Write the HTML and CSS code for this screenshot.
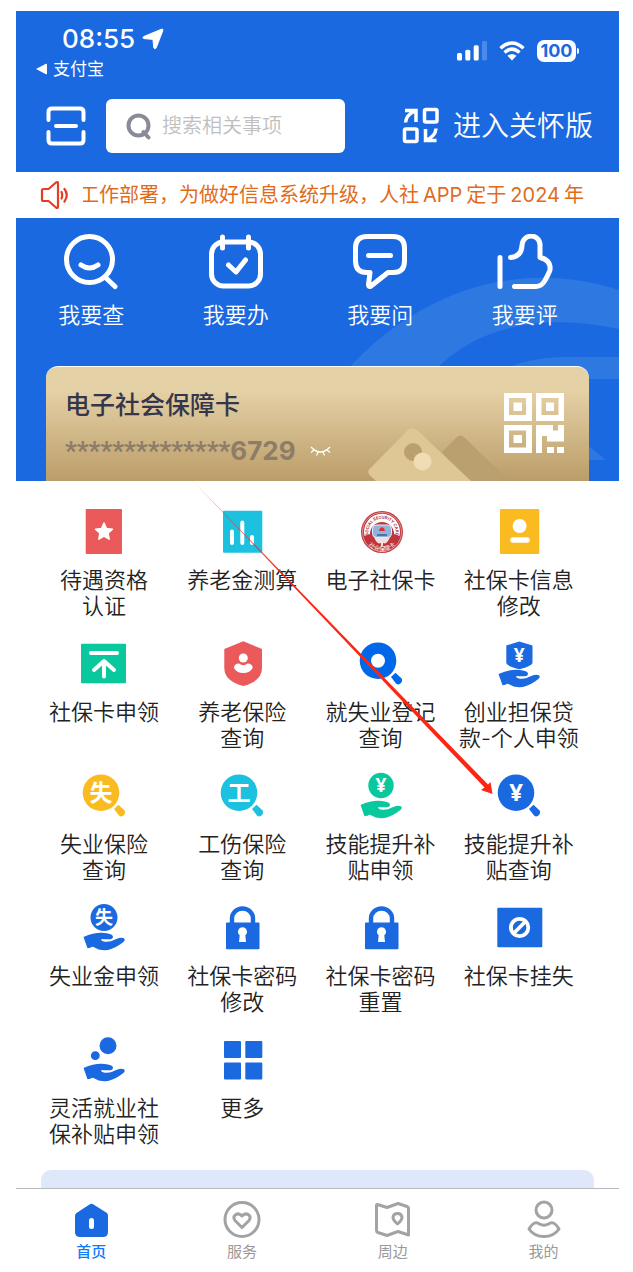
FILE: index.html
```html
<!DOCTYPE html>
<html lang="zh-CN">
<head>
<meta charset="utf-8">
<meta name="viewport" content="width=device-width, initial-scale=1">
<title>电子社保卡</title>
<link rel="stylesheet" href="styles.css">
</head>
<body>
<svg class="defs" aria-hidden="true">
  <symbol id="hand" viewBox="0 0 56 56"><path d="M7.500 38 Q18 33.500 26 33.800 Q36.500 34.300 37 37.500 Q37 40 34 40.300 Q29 40.500 25.500 40 Q24.500 41.500 27 42.300 Q33 44 39 40.500 L43 39 Q48.500 38 48.800 41 Q48.500 42.500 44 45.500 Q35 51.500 28 51.300 Q22 51 18.500 48.500 Q16 47 14.500 48.700 L11.500 49.300 Z"/></symbol>
  <symbol id="lens" viewBox="0 0 56 56"><circle cx="25" cy="25.700" r="18.300"/><path d="M38 42.500 L42.500 38.200 L48.300 43.800 Q50 46 48 48.500 Q45.500 51 43 49 Z" transform="translate(0 -.5)"/></symbol>
  <symbol id="lock" viewBox="0 0 56 56"><path d="M18 25 V19.500 A10.500 10 0 0 1 39 19.500 V25" fill="none" stroke="currentColor" stroke-width="4.400"/><rect x="12" y="23.500" width="33.500" height="26.700" rx="1"/><path fill="#fff" d="M28.500 28.200 a4.500 4.500 0 0 1 2.800 8 L32 43 H25 L25.700 36.200 A4.500 4.500 0 0 1 28.500 28.200Z"/></symbol>
</svg>
<div class="phone">
  <header class="top">
    <div class="status">
      <div class="status-left">
        <div class="time">08:55
          <svg width="22" height="22" viewBox="0 0 22 22" aria-hidden="true"><path d="M19.500 1.200 Q21.500 .6 20.800 2.700 L14.200 19.800 Q13 21.800 11.800 19.800 L11 12.200 Q10.900 11.400 10 11.300 L2 10.600 Q-.2 9.800 1.800 8.500Z" fill="#fff" stroke="#fff"/></svg>
        </div>
        <a class="back" href="#"><svg width="11" height="12" viewBox="0 0 11 12" aria-hidden="true"><path d="M0 6 L10 .8 Q11 .5 11 1.500 V10.500 Q11 11.500 10 11.200Z" fill="#fff"/></svg>支付宝</a>
      </div>
      <div class="status-right">
        <svg width="30" height="20" viewBox="0 0 30 20" aria-hidden="true" fill="#fff"><rect x="0" y="12" width="5" height="7.500" rx="1.500"/><rect x="8.300" y="8.700" width="5" height="10.800" rx="1.500"/><rect x="16.700" y="4.300" width="5" height="15.200" rx="1.500"/><rect x="25" y="0" width="5" height="19.500" rx="1.500" opacity=".22"/></svg>
        <svg class="wifi" width="26" height="20" viewBox="0 0 26 20" aria-hidden="true"><g fill="none" stroke="#fff" stroke-width="3.500"><path d="M1.500 7.300 Q13 -3.300 24.500 7.300"/><path d="M5.500 11.500 Q13 4.800 20.500 11.500"/></g><path fill="#fff" d="M8.500 14.800 Q13 11 17.500 14.800 L13 19.500Z"/></svg>
        <div class="battery">100</div>
      </div>
    </div>
    <div class="search-row">
      <button class="scan" type="button" aria-label="扫一扫"><svg width="40" height="40" viewBox="0 0 40 40" fill="none" stroke="#fff" stroke-width="4" stroke-linecap="round" stroke-linejoin="round"><path d="M2.500 14 V6 Q2.500 2.500 6 2.500 H34 Q37.500 2.500 37.500 6 V14 M2.500 26 V34 Q2.500 37.500 6 37.500 H34 Q37.500 37.500 37.500 34 V26 M10 20 H30"/></svg></button>
      <label class="search"><svg width="26" height="28" viewBox="0 0 26 28" fill="none" stroke="#8a8b98" stroke-width="4" aria-hidden="true"><circle cx="12.500" cy="13.500" r="10"/><path d="M17.500 20 L22.500 25.500" stroke-linecap="round"/></svg><input type="text" placeholder="搜索相关事项" aria-label="搜索相关事项"></label>
      <button class="care" type="button"><svg width="38" height="38" viewBox="0 0 38 38" fill="none" stroke="#fff" stroke-width="3.500" aria-hidden="true"><path d="M3 3.500 H14 V15 M3.500 15.500 Q4 8 13 4"/><rect x="22.500" y="2.500" width="12.500" height="12.500" rx="1.500"/><rect x="2.500" y="22" width="12.500" height="12.500" rx="1.500"/><path d="M34.500 33.500 H23.500 V22 M34 21.500 Q33.500 29 24.500 33"/></svg>进入关怀版</button>
    </div>
  </header>

  <div class="notice">
    <svg width="30" height="30" viewBox="0 0 30 30" fill="none" stroke="#e93b24" stroke-width="2.200" stroke-linejoin="round" stroke-linecap="round" aria-hidden="true"><path d="M8.500 9 L16 2.500 Q18 1.200 18 3.500 V26.500 Q18 28.800 16 27.500 L8.500 21 H3.500 Q2 21 2 19.500 V10.500 Q2 9 3.500 9Z"/><path d="M21.500 12 Q23 15 21.500 18.500 M24.500 9 Q29 15 24.500 21.500"/></svg>
    <p class="ticker"><span class="message">工作部署，为做好信息系统升级，人社<span class="latin">APP</span>定于<span class="latin">2024</span>年</span></p>
  </div>

  <section class="hero">
    <svg class="hero-bg" viewBox="0 0 603 263" preserveAspectRatio="xMaxYMin slice" aria-hidden="true"><g fill="#2e78e2"><path d="M330 153 C400 75 500 39 603 72 V111 C535 96 465 104 418 153Z"/><path d="M484 153 Q510 140 545 139 H603 V161 H484Z"/><path d="M570 226 L590 242 H570Z"/></g></svg>
    <nav class="quick">
      <a href="#"><svg width="56" height="56" viewBox="0 0 56 56"><circle cx="26.500" cy="25.500" r="23"/><path d="M42 43 L52 52.500 M18 31 Q26.500 37 35 31"/></svg>我要查</a>
      <a href="#"><svg width="56" height="56" viewBox="0 0 56 56"><rect x="3.500" y="8" width="49" height="44" rx="12"/><path d="M14.500 3 V14 M40.500 3 V14 M20.500 31 L28 38 L37.500 26"/></svg>我要办</a>
      <a href="#"><svg width="56" height="56" viewBox="0 0 56 56"><path d="M15 2.500 H41 Q52.500 2.500 52.500 14 V27 Q52.500 38.500 41 38.500 H36 L19 52 Q16.500 53.500 16.500 50.500 L18 38.500 H15 Q3.500 38.500 3.500 27 V14 Q3.500 2.500 15 2.500 M16.500 21.500 H38.500"/></svg>我要问</a>
      <a href="#"><svg width="56" height="56" viewBox="0 0 56 56"><path d="M3 23.500 V52.500 M13.500 23.500 Q24 23 25 12 C25 -1 43 -1 43 11 V23.500 Q54 26 53 36 Q52 39 48.500 45.500 Q45 52.500 39 52.500 H17.500"/></svg>我要评</a>
    </nav>
    <a class="card" href="#">
      <svg class="card-art" width="136" height="54" viewBox="0 0 136 54" aria-hidden="true"><path fill="#bba06f" d="M74 25 L88 11 Q92 6 97 11 L136 49 L131 54 H96Z"/><path fill="#dfc795" d="M1.500 42 L40 3 Q44 -1 49 3 L103 54 H8 L1.500 48 Q-1 45 1.500 42"/><circle cx="45" cy="25" r="9" fill="#bba06f"/><circle cx="54.500" cy="34.500" r="9" fill="#f0ddb3"/></svg>
      <div class="card-text">
        <h2>电子社会保障卡</h2>
        <div class="number"><span class="stars">**************</span><span>6729</span><svg width="21" height="10" viewBox="0 0 21 10" fill="none" stroke="#fff" stroke-width="1.300" aria-hidden="true"><path d="M1 1 Q10.500 11 20 1 M4 4 L1 6.500 M8 6 L6.500 9.500 M13 6 L14.500 9.500 M17 4 L20 6.500"/></svg></div>
      </div>
      <svg class="qr" width="60" height="60" viewBox="0 0 60 60" fill="#fff" fill-rule="evenodd" aria-hidden="true"><path d="M0 0H28V28H0Z M5 5V22H22V5Z M9.500 9.500H18V18H9.500Z M32 0H60V28H32Z M37.500 5V22H54.500V5Z M42 9.500H50V18H42Z M0 32H28V60H0Z M5 37.500V54.500H22V37.500Z M9.500 42H18V50H9.500Z M32 32H49V37.500H54V32H60V48.500H43V43H38V60H32Z M43 54H50V60H43Z M53 54H60V60H53Z"/></svg>
    </a>
  </section>

  <main class="services">
    <ul>
      <li><a href="#"><svg viewBox="0 0 56 56"><rect x="9.700" y="6" width="36.300" height="45" rx="1" fill="#eb5a5a"/><path fill="#fff" stroke="#fff" stroke-width="1.500" stroke-linejoin="round" d="M28 20 L30.500 25.500 L36.500 26.200 L32 30.200 L33.200 36.200 L28 33.200 L22.800 36.200 L24 30.200 L19.500 26.200 L25.500 25.500Z"/></svg>待遇资格<br>认证</a></li>
      <li><a href="#"><svg viewBox="0 0 56 56"><rect x="9" y="7.700" width="39.300" height="42" rx="1" fill="#1bc1df"/><path stroke="#fff" stroke-width="4" stroke-linecap="round" d="M18 28.500V40 M28.300 19.500V40 M38 34V40"/></svg>养老金测算</a></li>
      <li><a href="#"><svg viewBox="0 0 56 56"><circle cx="29" cy="29" r="21" fill="#c0353c"/><circle cx="29" cy="29" r="19.500" fill="none" stroke="#e9b9bb" stroke-width=".7"/><path d="M11.500 33 A18 18 0 1 1 46.500 33 L41 31 A12 12 0 1 0 17 31Z" fill="#fff"/><path d="M21 34 Q24 42 28 40 V43 H30 V40 Q34 42 37 34Z" fill="#f2dedf"/><rect x="19.500" y="22" width="19" height="12.500" rx="4" fill="#8fb4dc" stroke="#e7edf5" stroke-width="1"/><path d="M24 32H34" stroke="#4277b5" stroke-width="2"/><path d="M26 28 H32 L31 25.500 L29 24 L27 25.500Z" fill="#df2c2c"/><path id="arcTop" d="M16.300 34.500 A13.700 13.700 0 1 1 41.700 34.500" fill="none"/><path id="arcBottom" d="M13 39 A18.700 18.700 0 0 0 45 39" fill="none"/><text class="seal-en"><textPath href="#arcTop" startOffset="50%">SOCIAL SECURITY CARD</textPath></text><text class="seal-cn"><textPath href="#arcBottom" startOffset="50%">社会保障卡</textPath></text></svg>电子社保卡</a></li>
      <li><a href="#"><svg viewBox="0 0 56 56"><rect x="9" y="6" width="39.300" height="45" rx="1" fill="#fabb20"/><circle cx="28.600" cy="23" r="7" fill="#fff"/><path stroke="#fff" stroke-width="5.600" stroke-linecap="round" d="M22 37H36"/></svg>社保卡信息<br>修改</a></li>

      <li><a href="#"><svg viewBox="0 0 56 56"><rect x="5" y="8.800" width="45" height="39.400" rx="1" fill="#0ac89d"/><path fill="none" stroke="#fff" stroke-width="4" stroke-linecap="round" stroke-linejoin="round" d="M15 18H41 M18 35L28 26L38 35 M28 28V41.500"/></svg>社保卡申领</a></li>
      <li><a href="#"><svg viewBox="0 0 56 56"><path fill="#eb5a5a" d="M29.300 6.200L48 14V33Q48 46 29.300 51Q10.300 46 10.300 33V14Z"/><circle cx="29.300" cy="23" r="4.500" fill="#fff"/><path fill="#fff" d="M20 33 Q20 28.500 25 28.500 Q27 30.200 29.300 30.200 Q31.500 30.200 33.500 28.500 Q38.500 28.500 38.700 33 Q36 38 29.300 38 Q22.500 38 20 33Z"/></svg>养老保险<br>查询</a></li>
      <li><a href="#"><svg viewBox="0 0 56 56" class="sky"><use href="#lens"/><circle cx="25" cy="25.700" r="7" fill="#fff"/></svg>就失业登记<br>查询</a></li>
      <li><a href="#"><svg viewBox="0 0 56 56" class="blue"><path d="M28.300 6.500L41.500 10.500V28Q41 31 28.300 34.300Q15.500 31 15.300 28V10.500Z"/><use href="#hand" y="1"/><text class="yen" x="28.300" y="27">¥</text></svg>创业担保贷<br>款-个人申领</a></li>

      <li><a href="#"><svg viewBox="0 0 56 56" class="yellow"><use href="#lens"/><text class="glyph large" x="25" y="34">失</text></svg>失业保险<br>查询</a></li>
      <li><a href="#"><svg viewBox="0 0 56 56" class="cyan"><use href="#lens"/><text class="glyph large" x="25" y="34">工</text></svg>工伤保险<br>查询</a></li>
      <li><a href="#"><svg viewBox="0 0 56 56" class="green"><circle cx="28" cy="18.500" r="12.700"/><use href="#hand"/><text class="yen" x="28" y="25">¥</text></svg>技能提升补<br>贴申领</a></li>
      <li><a href="#"><svg viewBox="0 0 56 56" class="blue"><use href="#lens"/><text class="yen big" x="25" y="34">¥</text></svg>技能提升补<br>贴查询</a></li>

      <li><a href="#"><svg viewBox="0 0 56 56" class="blue"><circle cx="28" cy="18.500" r="13.500"/><use href="#hand"/><text class="glyph" x="28" y="25">失</text></svg>失业金申领</a></li>
      <li><a href="#"><svg viewBox="0 0 56 56" class="blue"><use href="#lock"/></svg>社保卡密码<br>修改</a></li>
      <li><a href="#"><svg viewBox="0 0 56 56" class="blue"><use href="#lock"/></svg>社保卡密码<br>重置</a></li>
      <li><a href="#"><svg viewBox="0 0 56 56" class="blue"><rect x="6.300" y="8.800" width="45" height="39.400" rx="1"/><circle cx="28.600" cy="28.500" r="8.700" fill="none" stroke="#fff" stroke-width="3.800"/><path stroke="#fff" stroke-width="3.800" d="M34.500 22.500L22.500 34.500"/></svg>社保卡挂失</a></li>

      <li><a href="#"><svg viewBox="0 0 56 56" class="blue"><circle cx="32" cy="14.700" r="8.500"/><circle cx="19.300" cy="24.700" r="4.400"/><use href="#hand" y="-1"/></svg>灵活就业社<br>保补贴申领</a></li>
      <li><a href="#"><svg viewBox="0 0 56 56" class="blue"><rect x="10" y="10" width="17" height="17" rx="1"/><rect x="31.300" y="10" width="17" height="17" rx="1"/><rect x="10" y="31.500" width="17" height="17" rx="1"/><rect x="31.300" y="31.500" width="17" height="17" rx="1"/></svg>更多</a></li>
    </ul>
    <svg class="pointer" width="304" height="318" viewBox="0 0 304 318" aria-hidden="true"><defs><linearGradient id="fade" x1="0" y1="0" x2="1" y2="1"><stop offset="0" stop-color="#fb2614" stop-opacity=".4"/><stop offset=".3" stop-color="#fb2614"/></linearGradient></defs><path fill="url(#fade)" d="M0 0 L298 306.500 L300.500 304 L302.500 316 L291 312 L294.500 309.500Z"/></svg>
  </main>

  <div class="banner"></div>
  <nav class="tabs">
    <a href="#" class="active"><svg width="40" height="40" viewBox="0 0 40 40"><path fill="#1a69e0" d="M18.500 4.500 Q20.500 3 22.500 4.500 L36 13 Q37 14 37 16 V32 Q37 37 32 37 H9 Q4 37 4 32 V16 Q4 14 5.500 13Z"/><path stroke="#fff" stroke-width="5" stroke-linecap="round" d="M20.500 20.500V26.500"/></svg>首页</a>
    <a href="#"><svg class="line" width="40" height="40" viewBox="0 0 40 40"><circle cx="20" cy="19.500" r="17"/><path d="M20 27.500 L13 20.500 Q10.500 17 13.500 14.800 Q17 12.500 20 16 Q23 12.500 26.500 14.800 Q29.500 17 27 20.500Z"/></svg>服务</a>
    <a href="#"><svg class="line" width="40" height="40" viewBox="0 0 40 40"><path d="M4.500 4.500 L14 7.500 L25 3.500 L34 6.500 Q35.500 7 35.500 8.500 V35 L25 31.500 L14 35.500 L5 32.500 Q3.500 32 3.500 30.500 V5.500 Q3.500 4.200 4.500 4.500Z"/><path d="M24.500 24 Q20 20 20 17.500 Q20.500 13.500 24.500 13.500 Q28.500 13.500 29 17.500 Q29 20 24.500 24Z"/></svg>周边</a>
    <a href="#"><svg class="line" width="40" height="40" viewBox="0 0 40 40"><circle cx="20" cy="10" r="8"/><path d="M5 29 Q10 20 15.500 24 Q20 26.500 24.500 24 Q30 20 35 29 Q30 36.500 20 36.500 Q10 36.500 5 29Z"/></svg>我的</a>
  </nav>
</div>
</body>
</html>
```
FILE: styles.css
```css
* { box-sizing: border-box; }
body {
  margin: 0;
  background: #fff;
  color: #222;
  font-family: Inter, "Noto Sans CJK SC", sans-serif;
}
a { color: inherit; text-decoration: none; }
button { background: none; border: 0; padding: 0; color: inherit; font: inherit; }
svg { display: block; flex: none; }
.defs { position: absolute; width: 0; height: 0; }
.phone { margin: 11px 14px 0 16px; }

.top { background: #1a69e0; color: #fff; padding: 12px 26px 19px 30px; }
.status { display: flex; justify-content: space-between; align-items: center; }
.status-left { margin-left: -10px; }
.time {
  display: flex;
  align-items: center;
  gap: 7px;
  padding-left: 26px;
  font-size: 26px;
  line-height: 32px;
  font-weight: 500;
}
.back { display: flex; align-items: center; gap: 6px; font-size: 17px; line-height: 28px; }
.status-right { display: flex; align-items: center; gap: 12px; padding: 0 17px 4px 0; }
.battery {
  position: relative;
  width: 39px;
  border-radius: 7px;
  background: #fff;
  color: #1a69e0;
  font-size: 18px;
  line-height: 22px;
  font-weight: 700;
  text-align: center;
}
.battery::after {
  content: "";
  position: absolute;
  right: -3px;
  top: 8px;
  width: 2px;
  height: 6px;
  border-radius: 0 2px 2px 0;
  background: #fff;
}
.search-row { display: flex; align-items: center; gap: 20px; margin-top: 16px; }
.search {
  display: flex;
  align-items: center;
  flex: 0 1 239px;
  min-width: 0;
  gap: 10px;
  height: 54px;
  padding: 0 20px;
  border-radius: 6px;
  background: #fff;
}
.search input {
  flex: 1;
  min-width: 0;
  border: 0;
  padding: 0;
  outline: 0;
  background: none;
  font: 350 20px/30px Inter, "Noto Sans CJK SC", sans-serif;
}
.search input::placeholder { color: #bfbfbf; opacity: 1; }
.care {
  display: flex;
  align-items: center;
  gap: 13px;
  margin-left: auto;
  font-size: 28px;
  line-height: 40px;
  font-weight: 350;
  white-space: nowrap;
}

.notice {
  display: flex;
  align-items: center;
  gap: 13px;
  height: 46px;
  padding: 0 31px 0 24px;
  color: #df6c1c;
}
.ticker {
  display: flex;
  flex: 1;
  min-width: 0;
  margin: 0;
  overflow: hidden;
  white-space: nowrap;
  font-size: 20px;
  line-height: 32px;
}
.message { margin-left: -4px; }
.latin { margin: 0 4px; }

.hero { position: relative; background: #1a69e0; padding: 16px 30px 0; }
.hero-bg { position: absolute; top: 0; left: 0; width: 100%; height: 100%; }
.quick {
  position: relative;
  display: grid;
  grid-template-columns: repeat(4, 1fr);
  margin: 0 -8px 0 -27px;
}
.quick a {
  display: flex;
  flex-direction: column;
  align-items: center;
  gap: 9px;
  color: #fff;
  font-size: 22px;
  line-height: 33px;
  font-weight: 350;
}
.quick svg { fill: none; stroke: #fff; stroke-width: 5; stroke-linecap: round; stroke-linejoin: round; }
.card {
  position: relative;
  display: flex;
  justify-content: space-between;
  margin-top: 34px;
  height: 115px;
  padding: 18px 25px 0 19px;
  overflow: hidden;
  border-top: 1px solid #fff;
  border-radius: 12px 12px 0 0;
  background: linear-gradient(#e5d1a6 20%, #bb9d69);
}
.card-art { position: absolute; right: 85px; bottom: 0; }
.card-text { position: relative; }
.card h2 { margin: 0; font-size: 25px; line-height: 40px; font-weight: 500; color: #35364b; }
.number {
  display: flex;
  align-items: center;
  margin-top: 10px;
  color: #8c7c68;
  font-size: 26px;
  line-height: 32px;
  font-weight: 700;
}
.number svg { margin-left: 14px; }
.stars { font-family: Roboto, sans-serif; }
.qr { margin-top: 8px; }

.services { position: relative; padding: 22px 31px 0 19px; }
.services ul {
  display: grid;
  grid-template-columns: repeat(4, 1fr);
  row-gap: 15px;
  margin: 0;
  padding: 0;
  list-style: none;
}
.services a {
  display: flex;
  flex-direction: column;
  align-items: center;
  min-height: 116px;
  font-size: 22px;
  line-height: 26px;
  font-weight: 350;
  text-align: center;
}
.services li { min-height: 117px; }
.services li svg { width: 56px; height: 56px; margin-bottom: 8px; }
.blue { fill: #1a69e0; color: #1a69e0; }
.sky { fill: #0068e8; }
.yellow { fill: #fabb20; }
.cyan { fill: #1bc1df; }
.green { fill: #0ac89d; }
.glyph, .yen { fill: #fff; text-anchor: middle; font-weight: 700; }
.glyph { font-size: 18px; font-family: "Noto Sans CJK SC", sans-serif; }
.glyph.large { font-size: 23px; }
.yen { font-size: 19px; font-family: "Noto Sans", sans-serif; }
.yen.big { font-size: 24px; }
.seal-en { fill: #a92b35; font-size: 4px; font-weight: 700; text-anchor: middle; }
.seal-cn { fill: #fff; font-size: 6px; text-anchor: middle; }
.pointer { position: absolute; left: 174px; top: -3px; pointer-events: none; }

.banner { height: 18px; margin: 22px 25px 0; border-radius: 10px 10px 0 0; background: #dfe8fb; }
.tabs {
  display: grid;
  grid-template-columns: repeat(4, 1fr);
  padding: 11px 0 7px;
  border-top: 1px solid #b9b9bf;
}
.tabs a {
  display: flex;
  flex-direction: column;
  align-items: center;
  color: #999;
  font-size: 15px;
  line-height: 24px;
}
.tabs .active { color: #0f7bfa; font-weight: 500; }
.line { fill: none; stroke: #a3a3a3; stroke-width: 3; stroke-linejoin: round; }
```
